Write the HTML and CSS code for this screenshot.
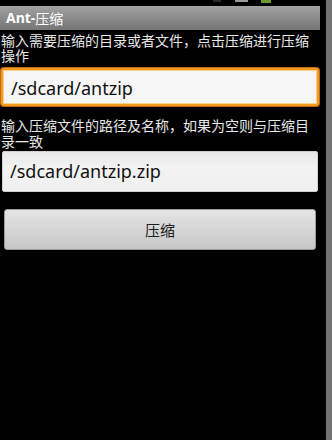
FILE: index.html
```html
<!DOCTYPE html>
<html lang="zh">
<head>
<meta charset="utf-8">
<title>Ant-压缩</title>
<link rel="stylesheet" href="styles.css">
</head>
<body>
<div class="screen">
  <div class="app">
    <div class="statusbar">
      <span class="st st-a"></span>
      <span class="st st-b"></span>
      <span class="st st-c"></span>
    </div>
    <div class="titlebar"><b class="title-latin">Ant-</b><span class="title-cjk">压缩</span></div>
    <div class="content">
      <p class="label label-first">输入需要压缩的目录或者文件，点击压缩进行压缩操作</p>
      <div class="field field-focus">/sdcard/antzip</div>
      <p class="label label-second">输入压缩文件的路径及名称，如果为空则与压缩目录一致</p>
      <div class="field field-plain">/sdcard/antzip.zip</div>
      <button class="btn">压缩</button>
    </div>
  </div>
  <div class="gutter"></div>
  <div class="scrollstrip"></div>
</div>
</body>
</html>
```

FILE: styles.css
```css
html, body {
  margin: 0;
  padding: 0;
  background: #000;
}
body {
  width: 332px;
  height: 440px;
  overflow: hidden;
  font-family: "Noto Sans", "Open Sans", "Noto Sans CJK SC", sans-serif;
}
.screen {
  display: flex;
  height: 440px;
}
.app {
  width: 320px;
  display: flex;
  flex-direction: column;
}
.gutter {
  width: 6px;
  background: #000;
}
.scrollstrip {
  width: 6px;
  background: #727272;
}
.statusbar {
  height: 6px;
  background: #000;
  display: flex;
  align-items: flex-start;
}
.st {
  display: block;
}
.st-a {
  margin-left: 213px;
  width: 8px;
  height: 2px;
  background: #2a2a2a;
}
.st-b {
  margin-left: 14px;
  width: 13px;
  height: 2px;
  background: #9a9a9a;
}
.st-c {
  margin-left: 13px;
  width: 10px;
  height: 3px;
  background: #6f9a2a;
}
.titlebar {
  height: 24px;
  background: linear-gradient(#a3a3a3, #8a8a8a 50%, #767676);
  color: #fff;
  display: flex;
  align-items: center;
  padding-left: 6px;
  font-size: 14px;
  line-height: 24px;
}
.title-latin {
  font-family: "Noto Sans", "Open Sans", sans-serif;
  font-weight: 700;
}
.title-cjk {
  font-family: "Noto Sans CJK SC", sans-serif;
  font-weight: 400;
}
.content {
  display: flex;
  flex-direction: column;
}
.label {
  margin: 0;
  padding-left: 1px;
  color: #e8e8e8;
  font-family: "Noto Sans CJK SC", sans-serif;
  font-size: 14px;
  line-height: 16px;
}
.label-first {
  margin-top: 3px;
  line-height: 15px;
}
.label-second {
  margin-top: 11px;
}
.field {
  box-sizing: border-box;
  color: #111;
  font-family: "Noto Sans", "Open Sans", sans-serif;
  font-size: 18px;
  display: flex;
  align-items: center;
  padding-left: 9px;
}
.field-focus {
  margin: 5px 1px 0 1px;
  height: 38px;
  background: #f6f6f6;
  border: 2px solid #f39a1e;
  border-radius: 3px;
  box-shadow: 0 0 0 1px #c26a10, inset 0 0 0 1px #fbd08a;
  padding-left: 8px;
  padding-top: 2px;
}
.field-plain {
  margin: 2px 2px 0 2px;
  height: 41px;
  background: linear-gradient(#e9e9e9, #f3f3f3 40%, #f0f0f0);
  border: 1px solid #cfcfcf;
  border-radius: 2px;
  padding-left: 7px;
  padding-bottom: 1px;
}
.btn {
  margin: 17px 4px 0 4px;
  height: 41px;
  border: 1px solid #9a9a9a;
  border-radius: 3px;
  background: linear-gradient(#e4e4e4, #d6d6d6 50%, #c6c6c6);
  color: #1e1e1e;
  font-family: "Noto Sans CJK SC", sans-serif;
  font-size: 15px;
  padding: 0;
}
```
